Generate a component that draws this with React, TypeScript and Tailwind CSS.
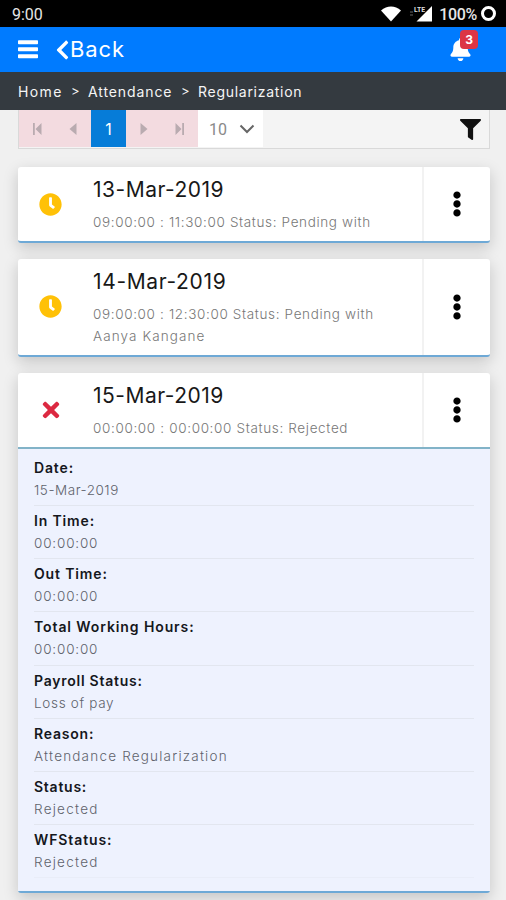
import React from 'react';
import { FaBell, FaChevronLeft, FaClock, FaEllipsisV, FaFilter, FaTimes } from 'react-icons/fa';

interface Entry {
  date: string;
  lines: { text: string; tracking: string }[];
  status: 'PENDING' | 'REJECTED';
  titleTracking: string;
}

const entries: Entry[] = [
  {
    date: '13-Mar-2019',
    titleTracking: 'tracking-[0.5px]',
    lines: [{ text: '09:00:00 : 11:30:00 Status: Pending with', tracking: 'tracking-[0.64px]' }],
    status: 'PENDING',
  },
  {
    date: '14-Mar-2019',
    titleTracking: 'tracking-[0.65px]',
    lines: [
      { text: '09:00:00 : 12:30:00 Status: Pending with', tracking: 'tracking-[0.64px]' },
      { text: 'Aanya Kangane', tracking: 'tracking-[1.1px]' },
    ],
    status: 'PENDING',
  },
  {
    date: '15-Mar-2019',
    titleTracking: 'tracking-[0.5px]',
    lines: [{ text: '00:00:00 : 00:00:00 Status: Rejected', tracking: 'tracking-[0.65px]' }],
    status: 'REJECTED',
  },
];

const details = [
  { label: 'Date:', value: '15-Mar-2019', lt: 'tracking-[0.85px]', vt: 'tracking-[0.53px]' },
  { label: 'In Time:', value: '00:00:00', lt: 'tracking-[0.85px]', vt: 'tracking-[0.83px]' },
  { label: 'Out Time:', value: '00:00:00', lt: 'tracking-[0.85px]', vt: 'tracking-[0.83px]' },
  { label: 'Total Working Hours:', value: '00:00:00', lt: 'tracking-[0.9px]', vt: 'tracking-[0.83px]' },
  { label: 'Payroll Status:', value: 'Loss of pay', lt: 'tracking-[0.75px]', vt: 'tracking-[0.68px]' },
  { label: 'Reason:', value: 'Attendance Regularization', lt: 'tracking-[0.8px]', vt: 'tracking-[1.2px]' },
  { label: 'Status:', value: 'Rejected', lt: 'tracking-[0.75px]', vt: 'tracking-[1.25px]' },
  { label: 'WFStatus:', value: 'Rejected', lt: 'tracking-[0.9px]', vt: 'tracking-[1.25px]' },
];

const StatusBar: React.FC = () => (
  <div className="flex h-[27px] items-center justify-between bg-black pl-3 pr-[10px] font-['Roboto',sans-serif] text-[16px] text-[#e6e6e6]">
    <span className="pt-[2px]">9:00</span>
    <div className="flex items-center">
      <svg width="22" height="17" viewBox="0 0 22 17" className="mr-[6px]">
        <path d="M1 5.5C7 0 15 0 21 5.5L11 16.5Z" fill="#fff" />
      </svg>
      <svg width="24" height="17" viewBox="0 0 24 17" className="mr-[7px]">
        <path d="M24 1V16.5H8.5Z" fill="#fff" />
        <path d="M2 7h3M2 10h3" stroke="#666" />
        <text x="6" y="6.5" fill="#ddd" fontSize="7" fontWeight="700" textLength="11" lengthAdjust="spacingAndGlyphs">LTE</text>
      </svg>
      <span className="mr-[4px] pt-[2px] font-medium tracking-[-0.3px]">100%</span>
      <span className="size-[15px] rounded-full border-[3px] border-white" />
    </div>
  </div>
);

const Paginator: React.FC = () => (
  <div className="ml-[18px] mr-4 flex h-[39px] items-start border border-t-0 border-[#d9d9d9] bg-[#f4f4f4]">
    <div className="flex h-[37px] w-[72px] items-center bg-[#f3dbe0] text-[#b9abb0]">
      <span className="flex flex-1 justify-center">
        <svg width="10" height="12" viewBox="0 0 10 12"><path d="M1 0h1.8v12H1zM9.5 0v12L3.5 6z" fill="currentColor" /></svg>
      </span>
      <span className="flex flex-1 justify-center">
        <svg width="8" height="12" viewBox="0 0 8 12"><path d="M7.5 0v12L.5 6z" fill="currentColor" /></svg>
      </span>
    </div>
    <div className="flex h-[37px] w-[35px] items-center justify-center bg-[#067cd8] text-[16px] text-white">1</div>
    <div className="flex h-[37px] w-[72px] items-center bg-[#f3dbe0] text-[#b9abb0]">
      <span className="flex flex-1 justify-center">
        <svg width="8" height="12" viewBox="0 0 8 12"><path d="M.5 0v12l7-6z" fill="currentColor" /></svg>
      </span>
      <span className="flex flex-1 justify-center">
        <svg width="10" height="12" viewBox="0 0 10 12"><path d="M7.2 0H9v12H7.2zM.5 0v12l6-6z" fill="currentColor" /></svg>
      </span>
    </div>
    <div className="flex h-[37px] w-[65px] items-center justify-between bg-white pl-[11px] pr-2 font-['Roboto',sans-serif] text-[16px] text-[#8a8a8a]">
      <span className="pt-[3px]">10</span>
      <svg width="16" height="10" viewBox="0 0 16 10"><path d="M1.5 1.5L8 8l6.500-6.500" fill="none" stroke="#666" strokeWidth="2" /></svg>
    </div>
    <FaFilter className="ml-auto mr-[8px] mt-[9px] size-[21px] text-[#111]" />
  </div>
);

const EntryHeader: React.FC<{ entry: Entry }> = ({ entry }) => (
  <div className="flex">
    <div className="flex w-[65px] items-center justify-center">
      {entry.status === 'PENDING' ? (
        <FaClock className="size-[23px] text-[#ffc107]" />
      ) : (
        <FaTimes className="size-[24px] text-[#dc2941]" />
      )}
    </div>
    <div className="flex-1 pb-[7.5px] pl-[10px] pt-[6px]">
      <h2 className={`h-[33px] whitespace-nowrap text-[21px] leading-[33px] text-[#181818] ${entry.titleTracking}`}>{entry.date}</h2>
      <div className="pt-[6px]">
        {entry.lines.map((line) => (
          <p key={line.text} className={`h-[21.5px] whitespace-nowrap text-[13.5px] font-light leading-[21.5px] text-[#777] ${line.tracking}`}>
            {line.text}
          </p>
        ))}
      </div>
    </div>
    <div className="flex w-[68px] items-center justify-center border-l-2 border-[#f2f2f2]">
      <FaEllipsisV className="size-[26px] text-black" />
    </div>
  </div>
);

const App: React.FC = () => {
  return (
    <div className="h-[900px] w-[506px] overflow-hidden bg-[#f0f0f0] font-['Inter',sans-serif]">
      <StatusBar />

      <header className="flex h-[45px] items-center bg-[#007bff] pl-[18px] pr-[34px] text-white">
        <svg width="20" height="19" viewBox="0 0 20 19" fill="currentColor">
          <rect width="20" height="4" y="0.300" rx="0.800" />
          <rect width="20" height="4" y="7.300" rx="0.800" />
          <rect width="20" height="4" y="14.300" rx="0.800" />
        </svg>
        <FaChevronLeft className="ml-[17px] h-[22px] w-[15px]" />
        <span className="text-[22px] tracking-[0.9px]">Back</span>
        <div className="relative ml-auto">
          <FaBell className="size-[23px]" />
          <span className="absolute -top-[8px] left-[11px] flex h-[19px] w-[18px] items-center justify-center rounded bg-[#dc3545] text-[12px] font-bold">3</span>
        </div>
      </header>

      <nav className="flex h-[38px] items-center bg-[#343a40] pl-[18px] text-[14px] text-[#f5f5f5]">
        <span className="w-[53px] tracking-[1.4px]">Home</span>
        <span className="w-[17px] pt-px text-[13px]">&gt;</span>
        <span className="w-[93px] tracking-[0.9px]">Attendance</span>
        <span className="w-[17px] pt-px text-[13px]">&gt;</span>
        <span className="tracking-[0.72px]">Regularization</span>
      </nav>

      <Paginator />

      <main className="flex flex-col gap-4 pl-[18px] pr-4 pt-[18px]">
        {entries.map((entry) => (
          <section
            key={entry.date}
            className="rounded-[3px] border-b-2 border-[#6ea9d6] bg-white shadow-[0_5px_15px_rgba(0,0,0,0.18)]"
          >
            <EntryHeader entry={entry} />
            {entry.status === 'REJECTED' && (
              <dl className="h-[444px] border-t-2 border-[#82b3c8] bg-[#eef2fe] px-4 pt-[4.5px]">
                {details.map((d) => (
                  <div key={d.label} className="h-[53.15px] border-b border-[#e2e6ef] pt-[4px] last:border-[#e9edf8]">
                    <dt className={`h-[22px] text-[14px] font-semibold leading-[22px] text-[#15171c] ${d.lt}`}>{d.label}</dt>
                    <dd className={`h-[22px] text-[13.5px] font-light leading-[22px] text-[#5f636c] ${d.vt}`}>{d.value}</dd>
                  </div>
                ))}
              </dl>
            )}
          </section>
        ))}
      </main>
    </div>
  );
};

export default App;
